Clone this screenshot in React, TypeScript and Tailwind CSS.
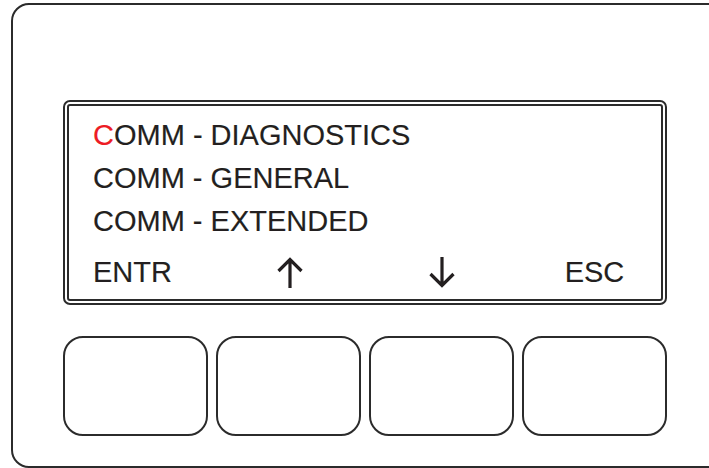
import React from "react";

const Up = () => (
  <svg width="26" height="31" viewBox="0 0 26 31" fill="none">
    <path d="M13 3V31M1.5 14L13 2.5L24.5 14" stroke="#231f20" strokeWidth="3.2" />
  </svg>
);

const Down = () => (
  <svg width="26" height="31" viewBox="0 0 26 31" fill="none">
    <path d="M13 0V28M1.5 17L13 28.5L24.5 17" stroke="#231f20" strokeWidth="3.2" />
  </svg>
);

export default function App() {
  return (
    <div className="w-[709px] h-[468px] overflow-hidden bg-white" style={{ fontFamily: '"Liberation Sans", Arial, sans-serif' }}>
      <div className="ml-[11px] mt-[3px] w-[722px] h-[465px] rounded-[18px] border-2 border-[#2b2b2b] pl-[50px] pt-[95px]">
        <div className="w-[604px] h-[205px] rounded-[7px] border-2 border-[#2b2b2b] p-[2px]">
          <div className="h-full w-full rounded-[3px] border-2 border-[#2b2b2b] pl-[24px] pt-[7.5px] text-[29px] leading-[43px] text-[#231f20] [-webkit-text-stroke:0.15px_#231f20]">
            <div>
              <span className="text-[#ed1c24] [-webkit-text-stroke:0.15px_#ed1c24]">C</span>OMM - DIAGNOSTICS
            </div>
            <div>COMM - GENERAL</div>
            <div>COMM - EXTENDED</div>
            <div className="mt-[8px] -ml-[30px] grid w-[604px] grid-cols-[145px_145px_145px_145px] gap-x-[8px] items-center">
              <div className="flex justify-center pr-[6px]">ENTR</div>
              <div className="flex justify-center h-[43px] items-center pl-[3px]"><Up /></div>
              <div className="flex justify-center h-[43px] items-center"><Down /></div>
              <div className="flex justify-center">ESC</div>
            </div>
          </div>
        </div>
        <div className="mt-[31px] flex gap-[8px]">
          <div className="w-[145px] h-[100px] rounded-[20px] border-2 border-[#2b2b2b]" />
          <div className="w-[145px] h-[100px] rounded-[20px] border-2 border-[#2b2b2b]" />
          <div className="w-[145px] h-[100px] rounded-[20px] border-2 border-[#2b2b2b]" />
          <div className="w-[145px] h-[100px] rounded-[20px] border-2 border-[#2b2b2b]" />
        </div>
      </div>
    </div>
  );
}
